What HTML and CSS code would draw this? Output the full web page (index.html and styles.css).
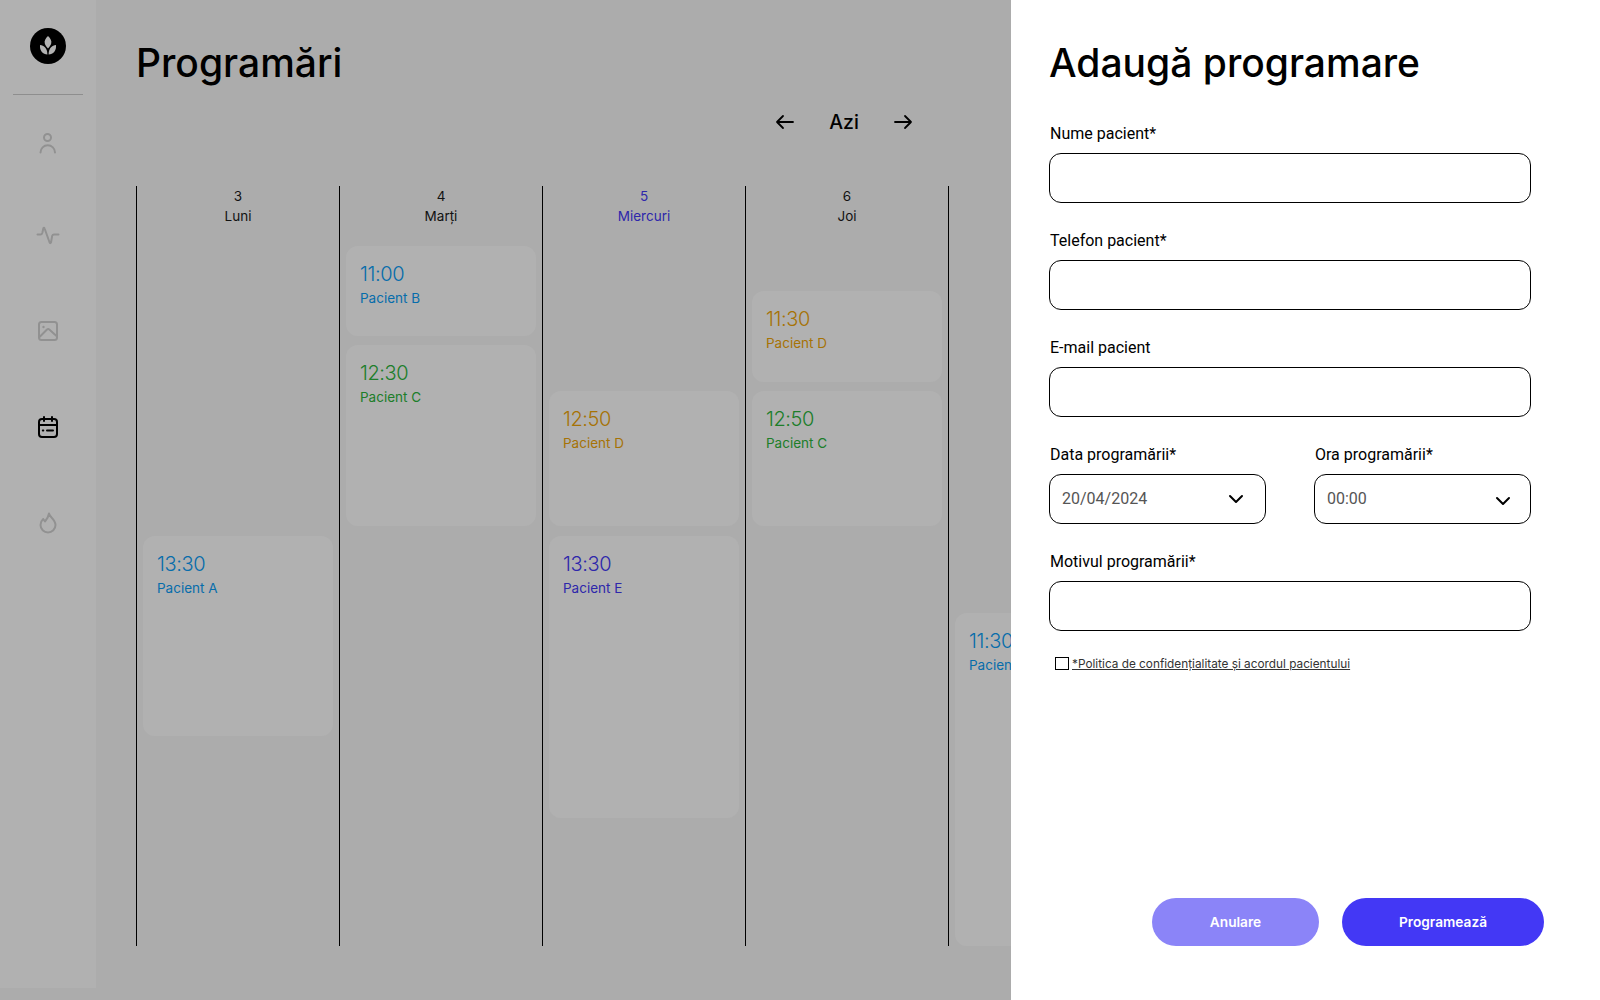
FILE: index.html
```html
<!DOCTYPE html>
<html lang="ro">
<head>
    <meta charset="UTF-8">
    <title>Programări</title>
    <link rel="stylesheet" href="styles.css">
</head>
<body>
    <div class="app">
        <nav class="sidebar">
            <div class="logo">
                <svg width="36" height="36" viewBox="0 0 36 36">
                    <circle cx="18" cy="18" r="18" fill="#000"/>
                    <path d="M18 8c2.500 2.400 4 5 3.200 7.500-.4 1.700-1.700 3.500-3.200 5-1.500-1.500-2.800-3.300-3.200-5C14 13 15.500 10.400 18 8z" fill="#fff"/>
                    <path d="M10 17c4 .3 7.300 3 7.400 9.500-4.500-.3-7.900-3.500-7.400-9.500z" fill="#fff"/>
                    <path d="M26 17c-4 .3-7.300 3-7.400 9.500 4.500-.3 7.900-3.500 7.400-9.500z" fill="#fff"/>
                </svg>
            </div>
            <div class="divider"></div>
            <a class="nav-item">
                <svg width="24" height="24" viewBox="0 -4 24 24" overflow="visible" fill="none" stroke="currentColor" stroke-width="2" stroke-linecap="round">
                    <circle cx="11.500" cy="6.500" r="3.500"/>
                    <path d="M4.500 21.500a7.250 7.250 0 0 1 14.500 0"/>
                </svg>
            </a>
            <a class="nav-item">
                <svg width="24" height="24" viewBox="0 0 24 24" fill="none" stroke="currentColor" stroke-width="2" stroke-linecap="round" stroke-linejoin="round">
                    <path d="M1.500 11.500H4.500c1 0 1.500-.5 1.800-1.500l1-4.500c.3-1 1-1 1.300 0l5 14c.3 1 1 1 1.400 0l1.200-6.800c.3-.9.8-1.200 1.700-1.200H22.500"/>
                </svg>
            </a>
            <a class="nav-item">
                <svg width="24" height="24" viewBox="0 0 24 24" fill="none" stroke="currentColor" stroke-width="2" stroke-linejoin="round">
                    <rect x="3" y="3" width="18" height="18" rx="2.500"/>
                    <path d="M3.500 18l7.500-7.500c.8-.7 1.500-.7 2.300 0L20.500 17"/>
                    <circle cx="7.500" cy="8" r="1.200" fill="currentColor" stroke="none"/>
                </svg>
            </a>
            <a class="nav-item active">
                <svg width="24" height="24" viewBox="0 0 24 24" fill="none" stroke="currentColor" stroke-width="2" stroke-linecap="round">
                    <rect x="3" y="4" width="18" height="18" rx="3"/>
                    <path d="M3 10h18M8 2v4M16 2v4M11 15.500h6"/>
                    <path d="M6.800 15.500h.5"/>
                </svg>
            </a>
            <a class="nav-item">
                <svg width="24" height="24" viewBox="0 0 24 24" fill="none" stroke="currentColor" stroke-width="2" stroke-linejoin="round">
                    <path d="M13 2.500c.5 3.500 6.500 6 6.500 11.500a7.500 7.500 0 0 1-15 0c0-2.500 1-4.500 2.700-6l1.800 2.500c1.500-2 3.500-4.500 4-8z"/>
                </svg>
            </a>
        </nav>

        <main class="main">
            <h1 class="page-title">Programări</h1>
            <div class="week-nav">
                <svg width="24" height="24" viewBox="0 0 24 24" fill="none" stroke="#000" stroke-width="1.800" stroke-linecap="round" stroke-linejoin="round">
                    <path d="M20 12H4M10 6l-6 6 6 6"/>
                </svg>
                <span class="today">Azi</span>
                <svg width="24" height="24" viewBox="0 0 24 24" fill="none" stroke="#000" stroke-width="1.800" stroke-linecap="round" stroke-linejoin="round">
                    <path d="M4 12h16M14 6l6 6-6 6"/>
                </svg>
            </div>

            <div class="calendar">
                <section class="day">
                    <header class="day-head"><div>3</div><div>Luni</div></header>
                    <div class="appt blue" style="margin-top:305px;height:200px">
                        <div class="appt-time">13:30</div>
                        <div class="appt-name">Pacient A</div>
                    </div>
                </section>
                <section class="day">
                    <header class="day-head"><div>4</div><div>Marți</div></header>
                    <div class="appt blue" style="margin-top:15px;height:90px">
                        <div class="appt-time">11:00</div>
                        <div class="appt-name">Pacient B</div>
                    </div>
                    <div class="appt green" style="margin-top:9px;height:181px">
                        <div class="appt-time">12:30</div>
                        <div class="appt-name">Pacient C</div>
                    </div>
                </section>
                <section class="day current">
                    <header class="day-head"><div>5</div><div>Miercuri</div></header>
                    <div class="appt orange" style="margin-top:160px;height:135px">
                        <div class="appt-time">12:50</div>
                        <div class="appt-name">Pacient D</div>
                    </div>
                    <div class="appt indigo" style="margin-top:10px;height:282px">
                        <div class="appt-time">13:30</div>
                        <div class="appt-name">Pacient E</div>
                    </div>
                </section>
                <section class="day">
                    <header class="day-head"><div>6</div><div>Joi</div></header>
                    <div class="appt orange" style="margin-top:60px;height:91px">
                        <div class="appt-time">11:30</div>
                        <div class="appt-name">Pacient D</div>
                    </div>
                    <div class="appt green" style="margin-top:9px;height:135px">
                        <div class="appt-time">12:50</div>
                        <div class="appt-name">Pacient C</div>
                    </div>
                </section>
                <section class="day">
                    <header class="day-head"><div>7</div><div>Vineri</div></header>
                    <div class="appt blue" style="margin-top:382px;height:333px">
                        <div class="appt-time">11:30</div>
                        <div class="appt-name">Pacient F</div>
                    </div>
                </section>
            </div>
        </main>
    </div>

    <div class="scrim"></div>

    <aside class="panel">
        <h2 class="panel-title">Adaugă programare</h2>
        <form class="form">
            <div class="field">
                <label>Nume pacient*</label>
                <div class="box"></div>
            </div>
            <div class="field">
                <label>Telefon pacient*</label>
                <div class="box"></div>
            </div>
            <div class="field">
                <label>E-mail pacient</label>
                <div class="box"></div>
            </div>
            <div class="field-row">
                <div class="field">
                    <label>Data programării*</label>
                    <div class="box select">
                        <span>20/04/2024</span>
                        <svg width="24" height="24" viewBox="0 0 24 24" fill="none" stroke="#000" stroke-width="2" stroke-linecap="round" stroke-linejoin="round"><path d="M6 9l6 6 6-6"/></svg>
                    </div>
                </div>
                <div class="field">
                    <label>Ora programării*</label>
                    <div class="box select">
                        <span>00:00</span>
                        <svg class="chev-low" width="24" height="24" viewBox="0 0 24 24" fill="none" stroke="#000" stroke-width="2" stroke-linecap="round" stroke-linejoin="round"><path d="M6 9l6 6 6-6"/></svg>
                    </div>
                </div>
            </div>
            <div class="field">
                <label>Motivul programării*</label>
                <div class="box"></div>
            </div>
            <div class="consent">
                <span class="check"></span>
                <a class="consent-text">*Politica de confidențialitate și acordul pacientului</a>
            </div>
        </form>
        <div class="actions">
            <button class="btn btn-light" type="button">Anulare</button>
            <button class="btn btn-primary" type="button">Programează</button>
        </div>
    </aside>
</body>
</html>
```

FILE: styles.css
```css
* {
    box-sizing: border-box;
}

html, body {
    margin: 0;
    height: 1000px;
    overflow: hidden;
}

body {
    font-family: "Inter", sans-serif;
    background-color: #f7f7f7;
    color: #000;
}

.app {
    display: flex;
    height: 1000px;
}

/* Sidebar */
.sidebar {
    width: 96px;
    height: 988px;
    background-color: #fefefe;
    display: flex;
    flex-direction: column;
    align-items: center;
    padding-top: 28px;
    flex-shrink: 0;
}

.logo {
    height: 36px;
}

.divider {
    width: 70px;
    height: 1px;
    background-color: #ccc;
    margin-top: 30px;
    margin-bottom: 22px;
}

.nav-item {
    height: 96px;
    color: #d0d0d0;
    display: flex;
    justify-content: center;
    padding-top: 10px;
}

.nav-item.active {
    color: #000;
}

/* Calendar */
.main {
    flex: 1;
    padding-left: 40px;
}

.page-title {
    font-weight: 500;
    font-size: 39px;
    line-height: 48px;
    margin: 39px 0 0;
}

.week-nav {
    display: flex;
    align-items: center;
    justify-content: flex-end;
    gap: 30px;
    width: 812px;
    height: 30px;
    margin-top: 20px;
    padding-right: 33px;
}

.today {
    font-size: 19.500px;
    font-weight: 500;
    width: 34px;
    text-align: center;
}

.calendar {
    display: flex;
    margin-top: 49px;
    height: 760px;
}

.day {
    width: 203px;
    flex-shrink: 0;
    border-left: 1px solid #000;
    padding: 0 6px;
}

.day-head {
    text-align: center;
    font-size: 13.500px;
    line-height: 20px;
    height: 45px;
    color: #1a1a1a;
}

.day.current .day-head {
    color: #4338f5;
}

.appt {
    background-color: #fefefe;
    border-radius: 12px;
    padding: 15px 14px;
}

.appt-time {
    font-size: 20px;
    font-weight: 300;
    letter-spacing: -0.4px;
    line-height: 26px;
}

.appt-name {
    font-size: 13.500px;
    line-height: 20px;
    margin-top: 1px;
}

.appt.blue { color: #0a9cf5; }
.appt.green { color: #2cb53c; }
.appt.orange { color: #eea508; }
.appt.indigo { color: #4338f5; }

/* Modal */
.scrim {
    position: absolute;
    inset: 0;
    background-color: rgba(0, 0, 0, 0.3);
}

.panel {
    position: absolute;
    top: 0;
    right: 0;
    bottom: 0;
    width: 589px;
    background-color: #fff;
    padding: 0 69px 0 38px;
}

.panel-title {
    font-weight: 500;
    font-size: 39px;
    line-height: 48px;
    margin: 39px 0 0;
}

.form {
    display: flex;
    flex-direction: column;
    gap: 26px;
    margin-top: 35px;
}

.field {
    display: flex;
    flex-direction: column;
    gap: 7px;
}

.field label {
    font-family: "Roboto", sans-serif;
    font-size: 16px;
    line-height: 24px;
    padding-left: 1px;
}

.box {
    height: 50px;
    border: 1px solid #000;
    border-radius: 12px;
    background-color: #fff;
}

.field-row {
    display: grid;
    grid-template-columns: 217px 217px;
    justify-content: space-between;
}

.select {
    display: flex;
    align-items: center;
    justify-content: space-between;
    padding: 0 17px 0 12px;
    font-family: "Roboto", sans-serif;
    font-size: 16px;
    color: #555;
}

.select span {
    margin-bottom: 2px;
}

.chev-low {
    margin-top: 3px;
    margin-right: -2px;
}

.consent {
    display: flex;
    align-items: center;
    gap: 3px;
    padding-left: 6px;
    margin-top: -1px;
}

.check {
    width: 14px;
    height: 13px;
    border: 1px solid #000;
    flex-shrink: 0;
}

.consent-text {
    font-size: 11.800px;
    text-decoration: underline;
    color: #333;
    padding-top: 1px;
}

.actions {
    position: absolute;
    right: 56px;
    bottom: 54px;
    display: flex;
    gap: 23px;
}

.btn {
    height: 48px;
    border: none;
    border-radius: 24px;
    color: #fff;
    font-family: "Inter", sans-serif;
    font-size: 13.700px;
    font-weight: 600;
    padding-bottom: 2px;
}

.btn-light {
    width: 167px;
    background-color: #8b84f8;
}

.btn-primary {
    width: 202px;
    background-color: #4338f5;
}
```
